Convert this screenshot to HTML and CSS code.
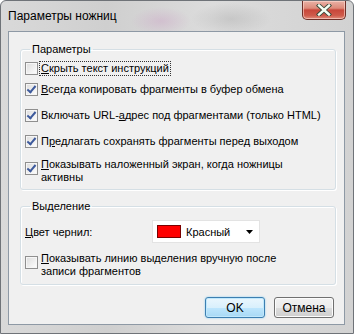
FILE: index.html
```html
<!DOCTYPE html>
<html lang="ru">
<head>
    <meta charset="UTF-8">
    <title>Параметры ножниц</title>
    <link rel="stylesheet" href="styles.css">
</head>
<body>
    <div class="window">
        <div class="titlebar">
            <span class="title">Параметры ножниц</span>
            <div class="close_btn">
                <svg width="16" height="12" viewBox="0 0 16 12">
                    <path d="M3 1.5 L13 10.5 M13 1.5 L3 10.5" stroke="#3a4a3a" stroke-width="4.2" stroke-linecap="square"/>
                    <path d="M3 1.5 L13 10.5 M13 1.5 L3 10.5" stroke="#f4fff4" stroke-width="2.4" stroke-linecap="square"/>
                </svg>
            </div>
        </div>
        <div class="client">
            <fieldset class="group group_opts">
                <legend>Параметры</legend>
                <div class="row row1">
                    <span class="cb"></span>
                    <span class="label focus"><u>С</u>крыть текст инструкций</span>
                </div>
                <div class="row row2">
                    <span class="cb checked"></span>
                    <span class="label"><u>В</u>сегда копировать фрагменты в буфер обмена</span>
                </div>
                <div class="row row3">
                    <span class="cb checked"></span>
                    <span class="label">Включать URL-<u>а</u>дрес под фрагментами (только HTML)</span>
                </div>
                <div class="row row4">
                    <span class="cb checked"></span>
                    <span class="label">П<u>р</u>едлагать сохранять фрагменты перед выходом</span>
                </div>
                <div class="row row5">
                    <span class="cb checked"></span>
                    <span class="label"><u>П</u>оказывать наложенный экран, когда ножницы<br>активны</span>
                </div>
            </fieldset>
            <fieldset class="group group_sel">
                <legend>Выделение</legend>
                <div class="ink_row">
                    <span class="ink_label"><u>Ц</u>вет чернил:</span>
                    <div class="combo">
                        <span class="swatch"></span>
                        <span class="combo_text">Красный</span>
                        <svg class="arrow" width="7" height="4" viewBox="0 0 7 4"><path d="M0 0 H7 L3.5 4 Z" fill="#000"/></svg>
                    </div>
                </div>
                <div class="row row6">
                    <span class="cb"></span>
                    <span class="label"><u>П</u>оказывать линию выделения вручную после<br>записи фрагментов</span>
                </div>
            </fieldset>
            <div class="buttons">
                <button class="btn btn_default">OK</button>
                <button class="btn">Отмена</button>
            </div>
        </div>
    </div>
</body>
</html>
```

FILE: styles.css
```css
body {
    margin: 0;
    padding: 0;
    font-family: "Liberation Sans", Arial, sans-serif;
    font-size: 11px;
    color: #000;
}
.window {
    width: 354px;
    height: 334px;
    box-sizing: border-box;
    border: 1px solid #6f7378;
    border-radius: 6px 6px 0 0;
    background: linear-gradient(90deg, #d9d9d9 0%, #cfcfcf 30%, #dcdcdc 60%, #d2d2d2 100%);
    display: flex;
    flex-direction: column;
    overflow: hidden;
}
.titlebar {
    height: 30px;
    flex-shrink: 0;
    display: flex;
    align-items: flex-start;
    justify-content: space-between;
    background:
        radial-gradient(ellipse 30px 14px at 160px 20px, rgba(205, 170, 200, 0.5), transparent),
        radial-gradient(ellipse 40px 16px at 230px 18px, rgba(170, 170, 170, 0.4), transparent);
}
.title {
    padding: 8px 0 0 7px;
    font-size: 12px;
}
.close_btn {
    width: 44px;
    height: 19px;
    margin-right: 7px;
    box-sizing: border-box;
    border: 1px solid #6e2f28;
    border-top: none;
    border-radius: 0 0 5px 5px;
    background: linear-gradient(180deg, #e9b2a6 0%, #dd8a7a 40%, #c8473a 50%, #cf5a4a 80%, #e08d7c 100%);
    display: flex;
    align-items: center;
    justify-content: center;
    box-shadow: inset 0 0 0 1px rgba(255, 220, 210, 0.6);
}
.client {
    flex: 1;
    margin: 0 8px 8px 7px;
    background: #f0f0f0;
    border: 1px solid #8e99a5;
    padding: 10px 8px 0 11px;
    display: flex;
    flex-direction: column;
}
.group {
    margin: 0;
    border: 1px solid #d5dfe5;
    border-radius: 3px;
    box-shadow: inset 1px 1px 0 #fff, 1px 1px 0 #fff;
    padding: 0 6px 0 4px;
}
.group legend {
    padding: 0 2px;
    margin-left: 5px;
    line-height: 14px;
    font-size: 11px;
}
.group_opts {
    height: 148px;
    box-sizing: border-box;
}
.group_sel {
    margin-top: 9px;
    height: 86px;
    box-sizing: border-box;
}
.row {
    display: flex;
    align-items: flex-start;
    line-height: 13px;
}
.row1 { margin-top: 6px; }
.row2 { margin-top: 7px; }
.row3 { margin-top: 12px; }
.row4 { margin-top: 12px; }
.row5 { margin-top: 9px; }
.row6 { margin-top: 9px; }
.row5 .cb, .row6 .cb { margin-top: 4px; }
.cb {
    width: 13px;
    height: 13px;
    box-sizing: border-box;
    border: 1px solid #8f8f8f;
    background: linear-gradient(135deg, #dcdcdc 0%, #f4f4f4 70%, #fff 100%);
    box-shadow: inset 0 0 0 1px #f6f6f6;
    flex-shrink: 0;
    margin-right: 1px;
    position: relative;
}
.cb.checked::after {
    content: "";
    position: absolute;
    left: 3px;
    top: 0px;
    width: 3px;
    height: 7px;
    border: solid #3d5a9c;
    border-width: 0 2px 2px 0;
    transform: rotate(40deg);
}
.label {
    padding: 0 1px;
    border: 1px dotted transparent;
    margin-top: -1px;
}
.label.focus {
    border-color: #333;
}
u {
    text-decoration: underline;
    text-underline-offset: 1px;
}
.ink_row {
    display: flex;
    align-items: center;
    margin-top: 7px;
}
.ink_label {
    width: 127px;
}
.combo {
    width: 108px;
    height: 23px;
    box-sizing: border-box;
    background: #fff;
    border: 1px solid #e3e3e3;
    display: flex;
    align-items: center;
    padding: 0 6px 0 4px;
}
.swatch {
    width: 22px;
    height: 11px;
    background: #ff0000;
    border: 1px solid #7a0000;
    margin-right: 5px;
}
.combo_text {
    flex: 1;
}
.buttons {
    display: flex;
    justify-content: flex-end;
    gap: 9px;
    margin-top: 12px;
    padding-right: 2px;
}
.btn {
    width: 60px;
    height: 21px;
    font-family: inherit;
    font-size: 12px;
    border: 1px solid #707070;
    border-radius: 3px;
    background: linear-gradient(180deg, #f2f2f2 0%, #ebebeb 50%, #dddddd 51%, #cfcfcf 100%);
    box-shadow: inset 0 0 0 1px #fcfcfc;
    padding: 0;
}
.btn_default {
    border-color: #3c7fb1;
    background: linear-gradient(180deg, #eaf6fd 0%, #d9f0fc 50%, #bee6fd 51%, #a7d9f5 100%);
    box-shadow: inset 0 0 0 1px #c0e8fc, 0 0 2px #7ecbf3;
}
```
